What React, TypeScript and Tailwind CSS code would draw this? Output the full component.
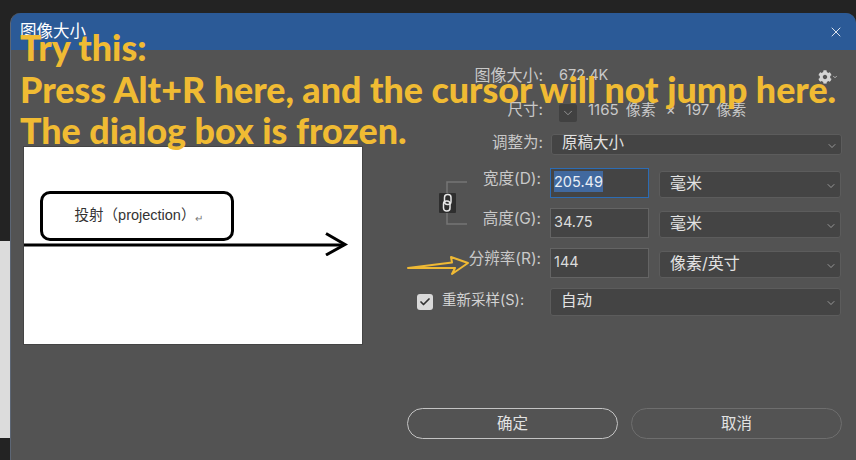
import { Check, ChevronDown, X } from 'lucide-react'
import { FaCog } from 'react-icons/fa'

const cjk = "font-['Inter','Noto_Sans_CJK_SC',sans-serif]"

function Select({ label, className, size }: { label: string; className: string; size: string }) {
  return (
    <div
      className={`flex items-center justify-between rounded-[3px] border border-[#5c5c5c] bg-[#444444] pl-[10px] pr-[3px] text-[#e2e2e2] ${size} ${className}`}
    >
      <span className="mb-[3px]">{label}</span>
      <ChevronDown size={12} strokeWidth={1.25} className="mt-[2px] text-[#c8c8c8]" />
    </div>
  )
}

function NumberInput({ value, active }: { value: string; active?: boolean }) {
  return (
    <div
      className={`flex h-[30px] w-[99px] items-center border bg-[#444444] px-[3px] pb-[3px] text-[14.5px] text-[#dcdcdc] ${
        active ? 'border-[#2c6cb4]' : 'border-[#646464]'
      }`}
    >
      <span className={active ? 'bg-[#41699f] text-[#e8eef6]' : ''}>{value}</span>
    </div>
  )
}

function FieldRow({ label, value, unit, active }: { label: string; value: string; unit: string; active?: boolean }) {
  return (
    <div className="flex h-[30px] items-start">
      <span className="mr-[9px] -ml-[8px] w-[80px] shrink-0 pt-[1px] text-right text-[15.5px] leading-[20px] whitespace-nowrap text-[#c9c9c9]">
        {label}
      </span>
      <NumberInput value={value} active={active} />
      <Select label={unit} size="text-[16px]" className="mt-[3px] ml-[10px] h-[27px] w-[182px]" />
    </div>
  )
}

function LinkBracket() {
  return (
    <svg width="30" height="46" viewBox="0 0 30 46" className="mt-[12px] ml-[39px] shrink-0">
      <path d="M8 14V2H28M8 32V44H28" fill="none" stroke="#757575" strokeWidth="1.5" />
      <rect x="0" y="13" width="17" height="20" rx="1" fill="#2e2e2e" />
      <rect x="5.5" y="14.5" width="6.5" height="10" rx="3" fill="none" stroke="#e8e8e8" strokeWidth="1.5" />
      <rect x="4.5" y="21" width="6.5" height="10" rx="3" fill="none" stroke="#e8e8e8" strokeWidth="1.5" />
    </svg>
  )
}

export default function App() {
  return (
    <div className={`relative flex h-[460px] w-[856px] overflow-hidden bg-[#232323] ${cjk}`}>
      <div className="flex w-[10px] shrink-0 flex-col">
        <div className="h-[241px] bg-[#232323]" />
        <div className="h-[197px] bg-[#dcdcdc]" />
      </div>

      <div className="mt-[13px] flex min-w-0 flex-1 flex-col rounded-t-[10px] border-l border-[#5c6675] bg-[#535353]">
        <div className="flex h-[37px] shrink-0 items-center justify-between rounded-t-[10px] bg-[#2b5a97] pr-[12px] pl-[9px] text-white">
          <span className="text-[16.5px]">图像大小</span>
          <X size={16} strokeWidth={1.25} />
        </div>

        <div className="flex flex-1">
          <div className="w-[389px] shrink-0 pt-[97px] pl-[13px]">
            <div className="h-[197px] w-[338px] bg-white pt-[44px] shadow-[0_0_0_1px_#444444]">
              <div className="ml-[16px] flex h-[50px] w-[194px] items-center justify-center rounded-[10px] border-[3px] border-black pl-[4px] font-['Liberation_Sans','Noto_Sans_CJK_SC',sans-serif] text-[14.5px] text-[#333333]">
                投射（projection）<span className="mt-[4px] text-[10px] text-[#777777]">↵</span>
              </div>
              <svg width="338" height="26" viewBox="0 0 338 26" className="-mt-[11px] block">
                <path d="M0 15H320" stroke="black" strokeWidth="3" />
                <path d="M302 3.5L321 14.5L302 25" fill="none" stroke="black" strokeWidth="3" />
              </svg>
            </div>
          </div>

          <div className="w-[442px] shrink-0 pt-[14px]">
            <div className="flex h-[24px] items-center text-[#c9c9c9]">
              <span className="mr-[16px] mb-[3px] w-[143px] text-right text-[16px]">图像大小:</span>
              <span className="mb-[3px] text-[14.5px]">672.4K</span>
              <span className="mt-[2px] ml-auto flex items-center pr-[4px] text-[#d4d4d4]">
                <FaCog size={14} />
                <ChevronDown size={6} strokeWidth={3} />
              </span>
            </div>

            <div className="mt-[10px] flex h-[24px] items-center text-[15px] text-[#c9c9c9]">
              <span className="mr-[16px] w-[143px] text-right text-[15.5px]">尺寸:</span>
              <span className="mt-[6px] flex h-[18px] w-[18px] items-center justify-center self-start rounded-[2px] bg-[#414141]">
                <ChevronDown size={14} strokeWidth={1} />
              </span>
              <span className="ml-[11px] flex gap-[7px] whitespace-nowrap">
                <span>1165</span>
                <span>像素</span>
                <span className="mx-[3px]">×</span>
                <span>197</span>
                <span>像素</span>
              </span>
            </div>

            <div className="mt-[12px] flex h-[21px] items-center">
              <span className="mr-[8px] mb-[3px] w-[143px] text-right text-[15.5px] text-[#c9c9c9]">调整为:</span>
              <Select label="原稿大小" size="text-[15.5px]" className="h-[21px] w-[291px]" />
            </div>

            <div className="mt-[13px] flex">
              <LinkBracket />
              <div className="flex flex-col gap-[10px]">
                <FieldRow label="宽度(D):" value="205.49" unit="毫米" active />
                <FieldRow label="高度(G):" value="34.75" unit="毫米" />
              </div>
            </div>

            <div className="mt-[10px] flex h-[30px] items-start pl-[69px]">
              <FieldRow label="分辨率(R):" value="144" unit="像素/英寸" />
            </div>

            <div className="mt-[10px] flex h-[28px] items-center">
              <span className="ml-[17px] flex h-[16px] w-[16px] items-center justify-center rounded-[3px] bg-[#d9d9d9] text-[#333333]">
                <Check size={12} strokeWidth={3.5} />
              </span>
              <span className="mb-[5px] ml-[9px] w-[108px] text-[14.5px] whitespace-nowrap text-[#d2d2d2]">重新采样(S):</span>
              <Select label="自动" size="text-[15.5px]" className="h-[28px] w-[291px]" />
            </div>

            <div className="mt-[92px] ml-[7px] flex gap-[13px] text-[15.5px] text-[#e2e2e2]">
              <button type="button" className="h-[31px] w-[211px] rounded-full border-[1.5px] border-[#c4c4c4]">
                确定
              </button>
              <button type="button" className="h-[31px] w-[211px] rounded-full border-[1.5px] border-[#6e6e6e]">
                取消
              </button>
            </div>
          </div>
        </div>
      </div>

      <div className="absolute top-[27px] left-[20px] font-['Lato',sans-serif] text-[35.8px] leading-[41.5px] font-black whitespace-nowrap text-[#f0bb33]">
        <p>Try this:</p>
        <p>Press Alt+R here, and the cursor will not jump here.</p>
        <p>The dialog box is frozen.</p>
      </div>

      <svg width="64" height="22" viewBox="0 0 64 22" className="absolute top-[255px] left-[407px]">
        <path d="M1 13L45 7.5L44 2L61 8L45 19L48 13Z" fill="none" stroke="#efb934" strokeWidth="2" strokeLinejoin="round" />
      </svg>
    </div>
  )
}
